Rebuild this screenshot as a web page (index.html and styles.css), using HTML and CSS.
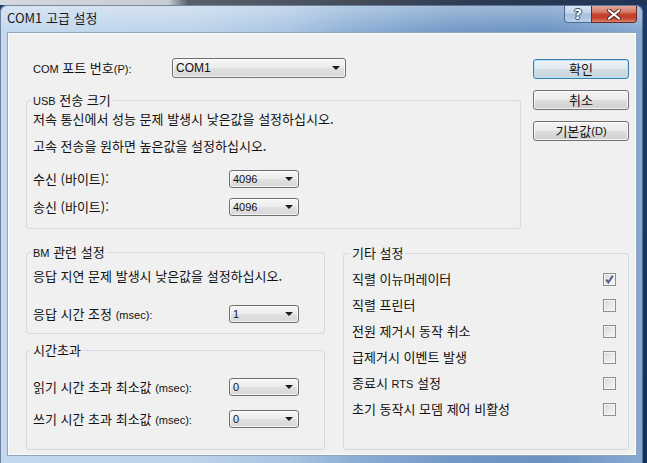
FILE: index.html
```html
<!DOCTYPE html>
<html lang="ko">
<head>
<meta charset="utf-8">
<title>COM1 고급 설정</title>
<link rel="stylesheet" href="styles.css">
</head>
<body>
<div class="desk">
  <div class="window">
    <div class="titlebar">
      <span class="title">COM1 고급 설정</span>
      <div class="caption-btns">
        <div class="cap help">?</div>
        <div class="cap close">
          <svg width="14" height="11" viewBox="0 0 14 11">
            <path d="M2 1.5L12 9.5M12 1.5L2 9.5" stroke="#5a2a22" stroke-width="4" stroke-linecap="round" fill="none"/>
            <path d="M2 1.5L12 9.5M12 1.5L2 9.5" stroke="#ffffff" stroke-width="2.2" stroke-linecap="round" fill="none"/>
          </svg>
        </div>
      </div>
    </div>
    <div class="client">
      <div class="top-row">
        <div class="top-left">
          <div class="com-row">
            <span class="com-label"><span class="lat">COM</span> 포트 번호<span class="lat">(P):</span></span>
            <div class="combo wide"><span class="val">COM1</span></div>
          </div>
          <fieldset class="group usb">
            <legend><span class="lat">USB</span> 전송 크기</legend>
            <p class="note n1">저속 통신에서 성능 문제 발생시 낮은값을 설정하십시오.</p>
            <p class="note n2">고속 전송을 원하면 높은값을 설정하십시오.</p>
            <div class="field r1"><span class="lbl">수신 (바이트):</span><div class="combo small"><span class="val lat">4096</span></div></div>
            <div class="field r2"><span class="lbl">송신 (바이트):</span><div class="combo small"><span class="val lat">4096</span></div></div>
          </fieldset>
        </div>
        <div class="buttons">
          <div class="btn default">확인</div>
          <div class="btn">취소</div>
          <div class="btn">기본값<span class="lat">(D)</span></div>
        </div>
      </div>
      <div class="bottom-row">
        <div class="bottom-left">
          <fieldset class="group bm">
            <legend><span class="lat">BM</span> 관련 설정</legend>
            <p class="note b1">응답 지연 문제 발생시 낮은값을 설정하십시오.</p>
            <div class="field b2"><span class="lbl">응답 시간 조정 <span class="lat">(msec):</span></span><div class="combo small"><span class="val lat">1</span></div></div>
          </fieldset>
          <fieldset class="group timeout">
            <legend>시간초과</legend>
            <div class="field t1"><span class="lbl">읽기 시간 초과 최소값 <span class="lat">(msec):</span></span><div class="combo small"><span class="val lat">0</span></div></div>
            <div class="field t2"><span class="lbl">쓰기 시간 초과 최소값 <span class="lat">(msec):</span></span><div class="combo small"><span class="val lat">0</span></div></div>
          </fieldset>
        </div>
        <fieldset class="group misc">
          <legend>기타 설정</legend>
          <div class="opts">
            <div class="opt"><span>직렬 이뉴머레이터</span><span class="chk checked"><svg width="11" height="11" viewBox="0 0 11 11"><path d="M2.2 5.6L4.4 8.4L8.8 1.8" stroke="#4b5f8c" stroke-width="2" fill="none"/></svg></span></div>
            <div class="opt"><span>직렬 프린터</span><span class="chk"></span></div>
            <div class="opt"><span>전원 제거시 동작 취소</span><span class="chk"></span></div>
            <div class="opt"><span>급제거시 이벤트 발생</span><span class="chk"></span></div>
            <div class="opt"><span>종료시 <span class="lat">RTS</span> 설정</span><span class="chk"></span></div>
            <div class="opt"><span>초기 동작시 모뎀 제어 비활성</span><span class="chk"></span></div>
          </div>
        </fieldset>
      </div>
    </div>
  </div>
</div>
</body>
</html>
```
FILE: styles.css
```css
html, body {
  margin: 0;
  padding: 0;
}
body {
  width: 647px;
  height: 463px;
  overflow: hidden;
  font-family: "Noto Sans CJK KR", "Noto Sans", sans-serif;
  font-size: 13px;
  color: #111;
}
.desk {
  width: 647px;
  height: 463px;
  background:
    linear-gradient(to right, #d4d8dd 0, #c8cdd3 26%, #59616d 29%, #444c59 55%, #2b3a52 75%, #1f3456 100%) top / 100% 5px no-repeat,
    linear-gradient(to bottom, #1a3a6c, #14305e);
}
.window {
  position: relative;
  top: 5px;
  width: 643px;
  height: 470px;
  box-sizing: border-box;
  padding: 0 6px 0 7px;
  border-radius: 7px 7px 0 0;
  background:
    linear-gradient(to bottom, rgba(255,255,255,0.35), rgba(255,255,255,0) 27px),
    linear-gradient(to right, #c3d8ee 0%, #bdd3ea 30%, #a9c4e2 45%, #8cafd5 55%, #7299c6 70%, #6a93c2 85%, #86a9d0 100%);
  box-shadow: inset 0 0 0 1px rgba(40,60,90,0.55);
}
.titlebar {
  height: 27px;
  display: flex;
  align-items: flex-start;
}
.title {
  line-height: 16px;
  padding-top: 5px;
  font-size: 13px;
  color: #1a1a1a;
}
.caption-btns {
  margin-left: auto;
  display: flex;
  margin-top: 1px;
}
.cap {
  height: 17px;
  box-sizing: border-box;
  display: flex;
  align-items: center;
  justify-content: center;
  border: 1px solid #4b6a92;
  border-top: none;
}
.help {
  width: 27px;
  border-radius: 0 0 0 4px;
  border-right: none;
  background: linear-gradient(to bottom, #d7e5f3 0%, #c1d4e8 45%, #a6bfdc 50%, #b9d0e9 100%);
  color: #fff;
  font-family: "DejaVu Sans", sans-serif;
  font-weight: bold;
  font-size: 14px;
  line-height: 15px;
  text-shadow: 0 0 1px #2d3f57, 1px 0 0 #3a4e6a, -1px 0 0 #3a4e6a, 0 1px 0 #3a4e6a, 0 -1px 0 #3a4e6a;
}
.close {
  width: 46px;
  border-radius: 0 0 4px 0;
  border-color: #6b2a22;
  background: linear-gradient(to bottom, #e3a89e 0%, #d37766 40%, #c2432f 50%, #c5412d 75%, #d8826b 100%);
}
.close svg { display: block; }

.client {
  height: 424px;
  box-sizing: border-box;
  border: 1px solid #8ea6c2;
  box-shadow: inset 0 0 0 1px #fbfcfd;
  background: #f0f0f0;
  padding: 25px 0 0 18px;
}
.lat {
  font-family: "Liberation Sans", "DejaVu Sans", sans-serif;
  font-size: 11px;
}
.top-row {
  display: flex;
}
.top-left {
  width: 495px;
}
.com-row {
  display: flex;
  align-items: center;
  height: 20px;
  padding-left: 7px;
}
.com-label {
  width: 139px;
  line-height: 16px;
}
.combo {
  position: relative;
  box-sizing: border-box;
  border: 1px solid #707070;
  border-radius: 3px;
  background: linear-gradient(to bottom, #f6f6f6 0%, #ececec 50%, #e0e0e0 51%, #d8d8d8 100%);
  box-shadow: inset 0 0 0 1px rgba(255,255,255,0.7);
  display: flex;
  align-items: center;
  padding-left: 3px;
}
.combo::after {
  content: "";
  position: absolute;
  right: 5px;
  top: 50%;
  margin-top: -2px;
  border-left: 4px solid transparent;
  border-right: 4px solid transparent;
  border-top: 4px solid #1a1a1a;
}
.combo .val {
  line-height: 14px;
}
.combo.wide {
  width: 174px;
  height: 20px;
}
.combo.wide .val {
  font-family: "Liberation Sans", "DejaVu Sans", sans-serif;
  font-size: 12px;
}
.combo.small {
  width: 70px;
  height: 18px;
}
.group {
  margin: 0;
  box-sizing: border-box;
  min-width: 0;
  border: 1px solid #d3d9de;
  border-radius: 3px;
  padding: 0 10px 0 6px;
}
.group legend {
  padding: 0 2px;
  margin-left: -2px;
  line-height: 16px;
}
.note {
  margin: 0;
  line-height: 16px;
}
.field {
  display: flex;
  align-items: center;
  height: 18px;
}
.lbl {
  width: 196px;
  line-height: 16px;
}
.usb {
  margin-top: 14px;
  padding-bottom: 12px;
}
.usb .n1 { margin-top: 2px; }
.usb .n2 { margin-top: 11px; }
.usb .r1 { margin-top: 16px; }
.usb .r2 { margin-top: 10px; }

.buttons {
  margin-left: 12px;
  margin-top: 1px;
  width: 96px;
  display: flex;
  flex-direction: column;
  gap: 11px;
}
.btn {
  height: 20px;
  box-sizing: border-box;
  border: 1px solid #707070;
  border-radius: 3px;
  background: linear-gradient(to bottom, #f3f3f3 0%, #ebebeb 48%, #dddddd 52%, #d0d0d0 100%);
  box-shadow: inset 0 0 0 1px rgba(255,255,255,0.75);
  display: flex;
  align-items: center;
  justify-content: center;
  line-height: 16px;
}
.btn.default {
  border-color: #3c7fb1;
  background: linear-gradient(to bottom, #eef4f8 0%, #e1eaf0 48%, #d2dde4 52%, #c7d3db 100%);
  box-shadow: inset 0 0 0 1px #b7e2f7;
}
.bottom-row {
  display: flex;
  margin-top: 15px;
}
.bottom-left {
  width: 299px;
}
.bm {
  padding-bottom: 10px;
}
.bm .b1 { margin-top: 7px; }
.bm .b2 { margin-top: 21px; }
.timeout {
  margin-top: 8px;
  padding-bottom: 21px;
}
.timeout .t1 { margin-top: 20px; }
.timeout .t2 { margin-top: 14px; }
.misc {
  width: 286px;
  margin-left: 18px;
  margin-top: 1px;
  padding: 0 12px 26px 8px;
}
.opts {
  margin-top: 5px;
  display: flex;
  flex-direction: column;
}
.opt {
  height: 26px;
  display: flex;
  align-items: center;
  justify-content: space-between;
  line-height: 16px;
}
.chk {
  width: 13px;
  height: 13px;
  box-sizing: border-box;
  border: 1px solid #8f8f8f;
  background: linear-gradient(135deg, #d6d6d6 0%, #ececec 60%, #f8f8f8 100%);
  box-shadow: inset 0 0 0 1px #f4f4f4;
  display: flex;
  align-items: center;
  justify-content: center;
}
.chk svg { display: block; }
```
